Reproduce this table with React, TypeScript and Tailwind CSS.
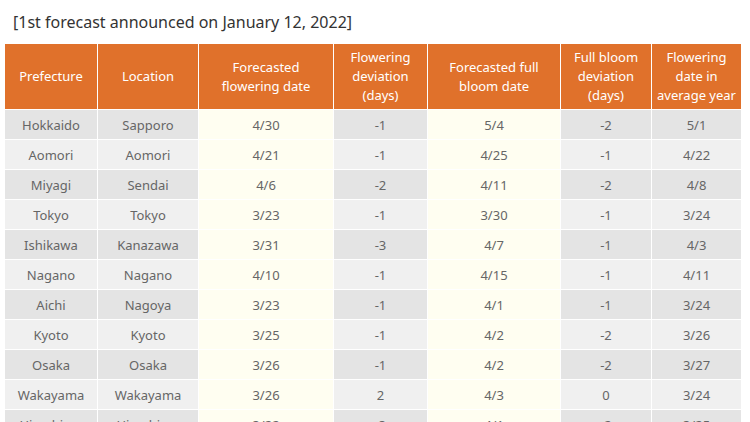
const rows: string[][] = [
  ['Hokkaido', 'Sapporo', '4/30', '-1', '5/4', '-2', '5/1'],
  ['Aomori', 'Aomori', '4/21', '-1', '4/25', '-1', '4/22'],
  ['Miyagi', 'Sendai', '4/6', '-2', '4/11', '-2', '4/8'],
  ['Tokyo', 'Tokyo', '3/23', '-1', '3/30', '-1', '3/24'],
  ['Ishikawa', 'Kanazawa', '3/31', '-3', '4/7', '-1', '4/3'],
  ['Nagano', 'Nagano', '4/10', '-1', '4/15', '-1', '4/11'],
  ['Aichi', 'Nagoya', '3/23', '-1', '4/1', '-1', '3/24'],
  ['Kyoto', 'Kyoto', '3/25', '-1', '4/2', '-2', '3/26'],
  ['Osaka', 'Osaka', '3/26', '-1', '4/2', '-2', '3/27'],
  ['Wakayama', 'Wakayama', '3/26', '2', '4/3', '0', '3/24'],
  ['Hiroshima', 'Hiroshima', '3/22', '-3', '4/1', '-2', '3/25'],
];

const headers = [
  'Prefecture',
  'Location',
  'Forecasted flowering date',
  'Flowering deviation (days)',
  'Forecasted full bloom date',
  'Full bloom deviation (days)',
  'Flowering date in average year',
];

const widths = ['w-[93px]', 'w-[101px]', 'w-[135px]', 'w-[94px]', 'w-[133px]', 'w-[91px]', 'w-[90px]'];
const headPad = ['px-2', 'px-2', 'px-4', 'px-3', 'px-4', 'px-2', 'px-1'];

export default function App() {
  return (
    <div className="w-[750px] h-[422px] overflow-hidden bg-white font-['Noto_Sans',sans-serif]">
      <p className="pt-[11px] pl-[13px] text-[16px] leading-[22px] text-[#333]">[1st forecast announced on January 12, 2022]</p>

      <table className="ml-1 mt-[10px] w-[737px] table-fixed border-collapse text-[13px]">
        <colgroup>
          {widths.map((w, i) => <col key={i} className={w} />)}
        </colgroup>
        <thead>
          <tr>
            {headers.map((h, i) => (
              <th key={i} className={`h-[66px] border border-white bg-[#e0712b] ${headPad[i]} text-center font-normal leading-[19px] text-white`}>{h}</th>
            ))}
          </tr>
        </thead>
        <tbody>
          {rows.map((r, ri) => (
            <tr key={ri} className={ri % 2 === 0 ? 'bg-[#e4e4e4]' : 'bg-[#f0f0f0]'}>
              {r.map((c, ci) => (
                <td key={ci} className={`h-[30px] border border-white text-center leading-[18px] text-[#666] ${ci === 2 || ci === 4 ? 'border-[#fffef1] bg-[#fffef1]' : ''}`}>{c}</td>
              ))}
            </tr>
          ))}
        </tbody>
      </table>
    </div>
  );
}
